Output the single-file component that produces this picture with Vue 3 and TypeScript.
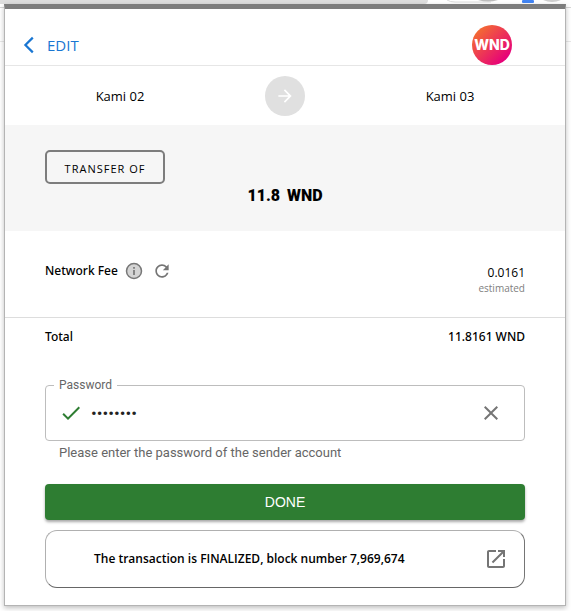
<script setup lang="ts">
import { ref } from 'vue'

const sender = 'Kami 02'
const recipient = 'Kami 03'
const token = 'WND'
const amount = '11.8'
const fee = '0.0161'
const total = '11.8161'
const blockNumber = (7969674).toLocaleString('en-US')
const password = ref('12345678')
</script>

<template>
  <div class="page">
    <div class="browser" aria-hidden="true">
      <span class="tab"></span>
      <svg class="toolbar" viewBox="0 0 143 10" width="143" height="10">
        <path d="M19 0q3 2 8 2h36" fill="none" stroke="#dcdcdc" />
        <path d="M50 0q10 3 20 0z" fill="#bdbdbd" />
        <rect x="94" y="0" width="12" height="3" rx="1" fill="#4285f4" />
        <path d="M115 0q9 4 18 0z" fill="#cfcfcf" />
      </svg>
    </div>

    <main class="panel">
      <header class="header">
        <button type="button" class="back">
          <svg viewBox="0 0 24 24" width="24" height="24" aria-hidden="true">
            <path d="M15.8 4.6L8.4 12l7.4 7.4" fill="none" stroke="#1976d2" stroke-width="2.2" />
          </svg>
          <span>EDIT</span>
        </button>
        <span class="logo">{{ token }}</span>
      </header>

      <section class="route">
        <span class="party">{{ sender }}</span>
        <span class="arrow">
          <svg viewBox="0 0 24 24" width="20" height="20" aria-hidden="true">
            <path fill="#fff" d="M12 4l-1.41 1.41L16.17 11H4v2h12.17l-5.58 5.59L12 20l8-8z" />
          </svg>
        </span>
        <span class="party">{{ recipient }}</span>
      </section>

      <section class="transfer">
        <span class="badge">TRANSFER OF</span>
        <p class="amount"><span>{{ amount }}</span><span>{{ token }}</span></p>
      </section>

      <section class="fee">
        <div class="fee-label">
          <span>Network Fee</span>
          <button type="button" class="icon" title="Fee details">
            <svg viewBox="0 0 20 20" width="20" height="20" aria-hidden="true">
              <circle cx="10" cy="10" r="7.5" fill="#d4d4d4" stroke="#777" stroke-width="1.5" />
              <path d="M10 9v5M10 6v1.7" stroke="#777" stroke-width="1.7" />
            </svg>
          </button>
          <button type="button" class="icon" title="Refresh">
            <svg viewBox="0 0 24 24" width="20" height="20" aria-hidden="true">
              <path fill="#757575" d="M17.65 6.35C16.2 4.9 14.21 4 12 4c-4.42 0-7.99 3.58-7.99 8s3.57 8 7.99 8c3.73 0 6.84-2.55 7.73-6h-2.08c-.82 2.33-3.04 4-5.65 4-3.31 0-6-2.69-6-6s2.69-6 6-6c1.66 0 3.14.69 4.22 1.78L13 11h7V4l-2.35 2.35z" />
            </svg>
          </button>
        </div>
        <div class="fee-value">
          <span>{{ fee }}</span>
          <small>estimated</small>
        </div>
      </section>

      <section class="total">
        <span>Total</span>
        <span>{{ total }} {{ token }}</span>
      </section>

      <form class="form" @submit.prevent>
        <fieldset class="field">
          <legend><label for="password">Password</label></legend>
          <svg viewBox="0 0 24 24" width="24" height="24" aria-hidden="true">
            <path fill="#2e7d32" d="M9 16.17L4.83 12l-1.42 1.41L9 19 21 7l-1.41-1.41z" />
          </svg>
          <input id="password" v-model="password" type="password" autocomplete="off" aria-describedby="hint" />
          <button type="button" class="icon" title="Clear" @click="password = ''">
            <svg viewBox="0 0 24 24" width="24" height="24" aria-hidden="true">
              <path fill="#757575" d="M19 6.41L17.59 5 12 10.59 6.41 5 5 6.41 10.59 12 5 17.59 6.41 19 12 13.41 17.59 19 19 17.59 13.41 12z" />
            </svg>
          </button>
        </fieldset>
        <p id="hint" class="hint">Please enter the password of the sender account</p>
        <button type="submit" class="done">DONE</button>
        <div class="result">
          <span>The transaction is FINALIZED, block number {{ blockNumber }}</span>
          <a href="#" class="icon" title="Open in explorer">
            <svg viewBox="0 0 24 24" width="24" height="24" aria-hidden="true">
              <path fill="#757575" d="M19 19H5V5h7V3H5c-1.11 0-2 .9-2 2v14c0 1.1.89 2 2 2h14c1.1 0 2-.9 2-2v-7h-2v7zM14 3v2h3.59l-9.83 9.83 1.41 1.41L19 6.41V10h2V3h-7z" />
            </svg>
          </a>
        </div>
      </form>
    </main>
  </div>
</template>

<style>
body {
  margin: 0;
  background: #fff;
}
</style>

<style scoped>
.page {
  position: relative;
  padding: 4px 5px 6px 4px;
  font-family: "Segoe UI", "Open Sans", sans-serif;
  font-size: 13px;
  line-height: 20px;
  color: #000;
}
.browser {
  position: absolute;
  inset: 0 0 auto;
  height: 41px;
  display: flex;
  align-items: flex-start;
  border-bottom: 1px solid #e8e8e8;
  background: linear-gradient(#d8d8d8, #d8d8d8) 0 7px / 100% 1px no-repeat;
}
.tab {
  flex: 1;
  height: 4px;
  background: #dedede;
  border-bottom-right-radius: 4px;
}
.panel {
  position: relative;
  background: #fff;
  border: 1px solid #b4b4b4;
  border-top: 5px solid #7d7d7d;
  box-shadow: 0 2px 5px rgba(0, 0, 0, 0.25);
}
button {
  border: 0;
  padding: 0;
  background: none;
  font: inherit;
  cursor: pointer;
}
svg {
  display: block;
}
.header {
  display: flex;
  justify-content: space-between;
  align-items: flex-end;
  height: 56px;
  padding: 0 53px 0 12px;
  border-bottom: 1px solid #e6e6e6;
}
.back {
  display: flex;
  align-items: center;
  gap: 6px;
  height: 40px;
  color: #1976d2;
  font-size: 15px;
}
.logo {
  width: 40px;
  height: 40px;
  border-radius: 50%;
  background: linear-gradient(135deg, #f4702f 10%, #e6007a 85%);
  color: #fff;
  font: 800 14px/40px Inter, sans-serif;
  text-align: center;
}
.route {
  display: grid;
  grid-template-columns: 1fr 40px 1fr;
  column-gap: 30px;
  align-items: center;
  padding: 10px 0 9px;
  text-align: center;
}
.arrow {
  display: grid;
  place-items: center;
  height: 40px;
  border-radius: 50%;
  background: #e0e0e0;
}
.transfer {
  padding: 25px 40px 24px;
  background: #f6f6f6;
}
.badge {
  display: block;
  width: 116px;
  border: 2px solid #7d7d7d;
  border-radius: 5px;
  padding: 7px 0 3px;
  font-size: 11px;
  letter-spacing: 1px;
  text-align: center;
}
.amount {
  display: flex;
  justify-content: center;
  gap: 7px;
  margin: 0;
  font: 900 16px/23px Impact, Roboto, sans-serif;
}
.fee {
  display: flex;
  justify-content: space-between;
  height: 56px;
  padding: 30px 40px 0;
  border-bottom: 1px solid #ddd;
}
.fee-label,
.total {
  font: 500 12px/20px "Segoe UI", "Noto Sans", sans-serif;
}
.fee-label {
  display: flex;
  align-items: center;
  gap: 6px;
  height: 20px;
}
.fee-label .icon + .icon {
  margin-left: 2px;
}
.fee-value {
  display: flex;
  flex-direction: column;
  align-items: flex-end;
  padding-top: 2px;
  font-size: 12px;
}
.fee-value small {
  color: #808080;
  font-size: 10px;
  line-height: 11px;
}
.total {
  display: flex;
  justify-content: space-between;
  padding: 9px 40px 0;
}
.form {
  padding: 32px 40px 17px;
  font-family: Roboto, sans-serif;
}
.field {
  display: flex;
  align-items: center;
  gap: 8px;
  min-width: 0;
  height: 62px;
  box-sizing: border-box;
  margin: 0;
  padding: 0 21px 6px 13px;
  border: 1px solid #bdbdbd;
  border-radius: 4px;
}
.field legend {
  margin-left: -5px;
  padding: 0 5px;
  line-height: 12px;
  font-size: 12px;
  color: #666;
}
.field input {
  flex: 1;
  min-width: 0;
  border: 0;
  padding: 0;
  outline: 0;
  background: none;
  font: 17px/24px Roboto, sans-serif;
  color: #222;
}
.hint {
  margin: 2px 14px 0;
  font-size: 13px;
  color: #666;
}
.done {
  display: block;
  width: 100%;
  margin-top: 21px;
  padding: 8px;
  border-radius: 4px;
  background: #2e7d32;
  box-shadow: 0 2px 3px rgba(0, 0, 0, 0.35);
  color: #fff;
  font: 14px/20px "Liberation Sans", sans-serif;
}
.result {
  display: flex;
  justify-content: space-between;
  align-items: center;
  margin-top: 10px;
  padding: 16px 16px 16px 48px;
  border: 1px solid;
  border-color: #b0b0b0 #757575 #666 #b0b0b0;
  border-radius: 12px;
  font: 600 12px/24px "Segoe UI", "Open Sans", sans-serif;
}
</style>
